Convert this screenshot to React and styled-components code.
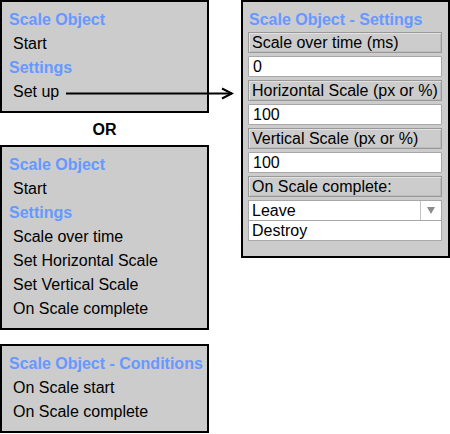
import React from "react";
import styled, { createGlobalStyle } from "styled-components";

const GlobalStyle = createGlobalStyle`
  html, body {
    margin: 0;
    padding: 0;
    background: #ffffff;
  }
  body {
    font-family: "Liberation Sans", Arial, sans-serif;
    color: #000;
  }
`;

const Page = styled.div`
  position: relative;
  width: 450px;
  height: 434px;
  display: flex;
  justify-content: space-between;
  overflow: hidden;
`;

const Column = styled.div`
  width: 209px;
  display: flex;
  flex-direction: column;
`;

const Box = styled.div`
  box-sizing: border-box;
  width: 209px;
  background: #cccccc;
  border: 2px solid #000;
  padding: 6px 0 7px 7px;
  margin-top: ${(p) => p.$top || 0}px;
`;

const Heading = styled.div`
  font-size: 16px;
  line-height: 24px;
  font-weight: bold;
  color: #6699ff;
  white-space: nowrap;
`;

const Item = styled.div`
  font-size: 16px;
  line-height: 24px;
  padding-left: 4px;
  white-space: nowrap;
`;

const Or = styled.div`
  height: 32px;
  line-height: 33px;
  text-align: center;
  font-size: 16px;
  font-weight: bold;
`;

const Arrow = styled.svg`
  position: absolute;
  left: 66px;
  top: 87px;
`;

const Panel = styled.div`
  box-sizing: border-box;
  width: 209px;
  height: 258px;
  background: #cccccc;
  border: 2px solid #000;
  padding: 6px 6px 0 5px;
  display: flex;
  flex-direction: column;
`;

const PanelHeading = styled(Heading)`
  padding-left: 1px;
`;

const Fields = styled.div`
  display: flex;
  flex-direction: column;
  gap: 3px;
`;

const Label = styled.div`
  box-sizing: border-box;
  height: 21px;
  background: #cccccc;
  border: 1px solid #999999;
  box-shadow: inset 1px 1px 0 #e2e2e2, inset -1px -1px 0 #bdbdbd;
  padding-left: 3px;
  font-size: 16px;
  line-height: 20px;
  white-space: nowrap;
`;

const Field = styled.div`
  box-sizing: border-box;
  height: 21px;
  background: #ffffff;
  border: 1px solid #a8a8a8;
  border-radius: 1px;
  padding-left: 4px;
  font-size: 16px;
  line-height: 20px;
`;

const Select = styled.div`
  display: flex;
  flex-direction: column;
`;

const SelectRow = styled.div`
  box-sizing: border-box;
  height: 21px;
  display: flex;
  background: #ffffff;
  border: 1px solid #a8a8a8;
  font-size: 16px;
  line-height: 20px;
`;

const SelectValue = styled.div`
  flex: 1;
  padding-left: 3px;
`;

const SelectButton = styled.div`
  width: 20px;
  border-left: 1px solid #c4c4c4;
  display: flex;
  align-items: center;
  justify-content: center;
`;

const Triangle = styled.span`
  width: 0;
  height: 0;
  border-left: 4px solid transparent;
  border-right: 4px solid transparent;
  border-top: 7px solid #8c8c8c;
`;

const Option = styled.div`
  box-sizing: border-box;
  height: 20px;
  background: #ffffff;
  border: 1px solid #a8a8a8;
  border-top: none;
  padding-left: 3px;
  font-size: 16px;
  line-height: 19px;
`;

export default function App() {
  return (
    <Page>
      <GlobalStyle />
      <Column>
        <Box>
          <Heading>Scale Object</Heading>
          <Item>Start</Item>
          <Heading>Settings</Heading>
          <Item>Set up</Item>
        </Box>
        <Or>OR</Or>
        <Box>
          <Heading>Scale Object</Heading>
          <Item>Start</Item>
          <Heading>Settings</Heading>
          <Item>Scale over time</Item>
          <Item>Set Horizontal Scale</Item>
          <Item>Set Vertical Scale</Item>
          <Item>On Scale complete</Item>
        </Box>
        <Box $top={14}>
          <Heading>Scale Object - Conditions</Heading>
          <Item>On Scale start</Item>
          <Item>On Scale complete</Item>
        </Box>
      </Column>

      <Arrow width="168" height="13" viewBox="0 0 168 13">
        <line x1="0" y1="6.5" x2="166" y2="6.5" stroke="#000" strokeWidth="2" />
        <polyline points="156,1.5 166,6.5 156,11.5" fill="none" stroke="#000" strokeWidth="2" />
      </Arrow>

      <Panel>
        <PanelHeading>Scale Object - Settings</PanelHeading>
        <Fields>
          <Label>Scale over time (ms)</Label>
          <Field>0</Field>
          <Label>Horizontal Scale (px or %)</Label>
          <Field>100</Field>
          <Label>Vertical Scale (px or %)</Label>
          <Field>100</Field>
          <Label>On Scale complete:</Label>
          <Select>
            <SelectRow>
              <SelectValue>Leave</SelectValue>
              <SelectButton>
                <Triangle />
              </SelectButton>
            </SelectRow>
            <Option>Destroy</Option>
          </Select>
        </Fields>
      </Panel>
    </Page>
  );
}
